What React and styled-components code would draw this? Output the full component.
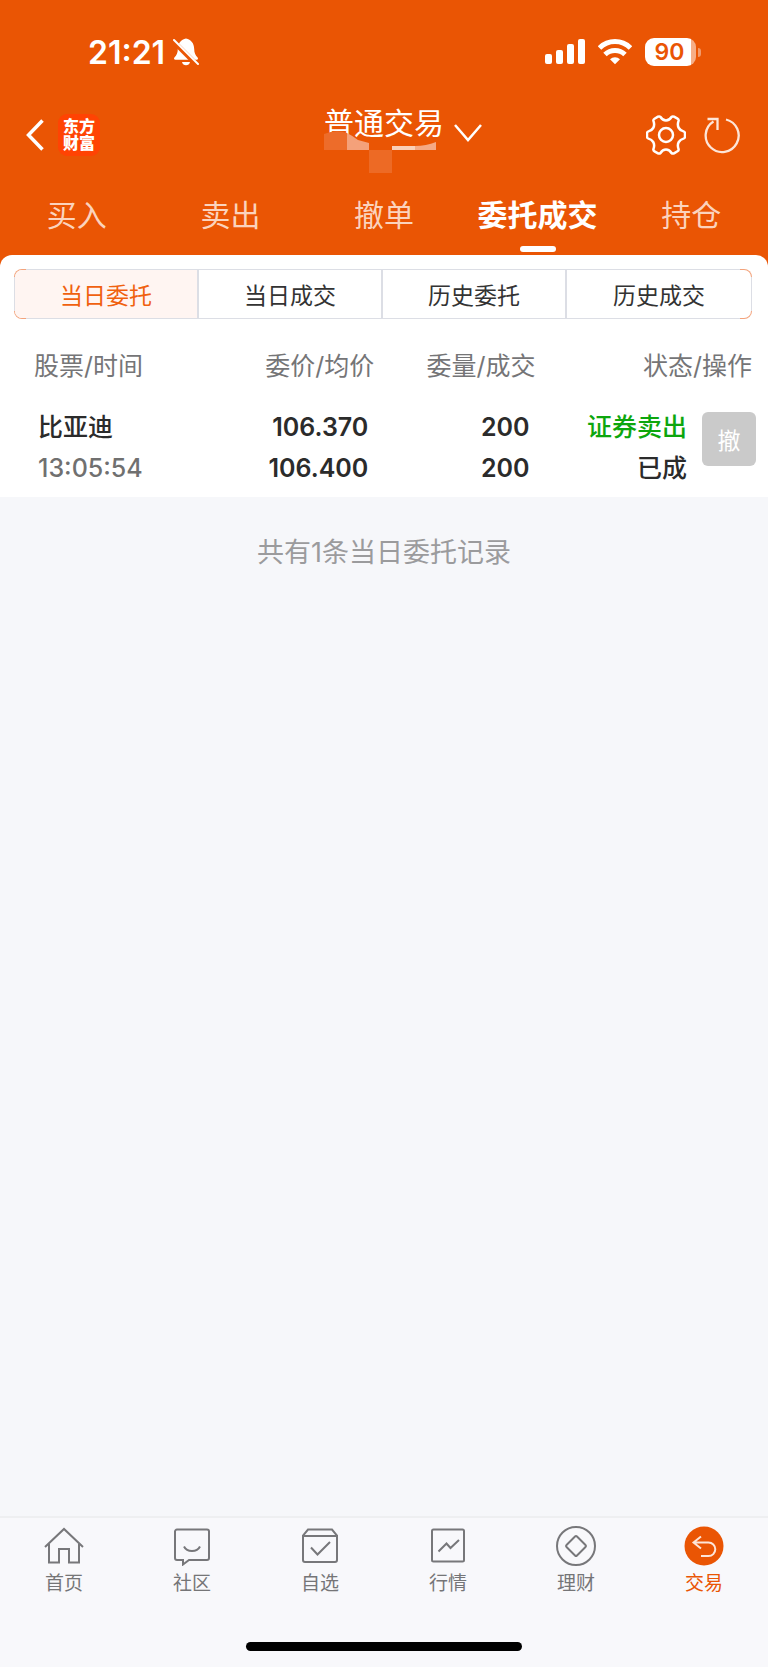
import styled, { createGlobalStyle } from "styled-components";

const GlobalStyle = createGlobalStyle`
  :root {
    --orange: #ea5504;
    --ink: #2b2b2b;
    --gray: #757577;
    --line: #dcdee5;
  }

  * {
    box-sizing: border-box;
  }

  body {
    margin: 0;
    background-color: #f6f7fa;
    font-family: Inter, "Noto Sans CJK SC", sans-serif;
    color: var(--ink);
  }

  button {
    padding: 0;
    border: none;
    background: none;
    font-family: inherit;
    color: inherit;
  }

  a {
    text-decoration: none;
    color: inherit;
  }

  svg {
    display: block;
    flex: none;
  }
`

const Page = styled.div`
  display: flex;
  flex-direction: column;
  min-height: 100vh;
`

const Top = styled.header`
  background-color: var(--orange);
  color: white;
`

const StatusBar = styled.div`
  display: flex;
  align-items: center;
  justify-content: space-between;
  height: 104px;
  padding: 0 67px 0 88px;
`

const StatusGroup = styled.div`
  display: flex;
  align-items: center;
  gap: ${({ $gap }) => $gap}px;
`

const Clock = styled.time`
  padding-top: 2px;
  font-size: 32px;
  font-weight: 600;
  line-height: 40px;
`

const Battery = styled.div`
  display: flex;
  align-items: center;
  gap: 2px;

  span {
    width: 51px;
    height: 28px;
    padding-right: 2px;
    border-radius: 9px;
    background: linear-gradient(90deg, white 46px, #f6ae87 46px);
    color: var(--orange);
    font-size: 23px;
    font-weight: 600;
    line-height: 28px;
    text-align: center;
  }

  &::after {
    content: "";
    width: 3px;
    height: 9px;
    border-radius: 0 4px 4px 0;
    background-color: #f29a6c;
  }
`

const NavBar = styled.div`
  display: grid;
  grid-template-columns: 1fr auto 1fr;
  height: 62px;
  padding: 0 28px 0 26px;
`

const NavSide = styled.div`
  display: flex;
  align-items: center;
  justify-content: ${({ $end }) => ($end ? "flex-end" : "flex-start")};
  gap: ${({ $end }) => ($end ? 18 : 14)}px;
`

const Logo = styled.a`
  display: flex;
  flex-direction: column;
  align-items: center;
  justify-content: center;
  width: 42px;
  height: 42px;
  border-radius: 9px;
  background-color: #ff4303;
  font-size: 16px;
  font-weight: 900;
  line-height: 17px;
`

const Account = styled.div`
  position: relative;
`

const AccountButton = styled.button`
  display: flex;
  align-items: center;
  gap: 10px;
  padding-left: 40px;
  font-size: 30px;
  line-height: 30px;

  svg {
    margin-top: 20px;
  }
`

const Mosaic = styled.svg`
  position: absolute;
  top: 27px;
  left: 40px;
`

const Tabs = styled.nav`
  display: grid;
  grid-template-columns: repeat(5, 1fr);
  padding: 29px 0 3px;
`

const Tab = styled.a`
  display: flex;
  flex-direction: column;
  align-items: center;
  gap: 11px;
  font-size: 30px;
  line-height: 40px;
  font-weight: ${({ $active }) => ($active ? 700 : 400)};
  color: ${({ $active }) => ($active ? "white" : "#fbd3bd")};

  &::after {
    content: "";
    width: 36px;
    height: 6px;
    border-radius: 3px;
    background-color: ${({ $active }) => ($active ? "white" : "transparent")};
  }
`

const SheetBack = styled.div`
  background-color: var(--orange);
`

const Sheet = styled.section`
  padding-top: 14px;
  border-radius: 12px 12px 0 0;
  background-color: white;
`

const Segments = styled.div`
  display: grid;
  grid-template-columns: repeat(4, 1fr);
  height: 50px;
  margin: 0 16px 0 14px;
  border: 1px solid transparent;
  border-radius: 8px;
  background:
    linear-gradient(white, white) padding-box,
    linear-gradient(90deg, transparent 12px, var(--line) 12px calc(100% - 12px), transparent 0) border-box,
    linear-gradient(#f3a37c 8px, var(--line) 8px calc(100% - 8px), #f3a37c 0) border-box;
`

const Segment = styled.button`
  font-size: 23px;
  color: ${({ $active }) => ($active ? "#f0610f" : "#333")};
  background-color: ${({ $active }) => ($active ? "#fff5f2" : "transparent")};
  border-right: 2px solid var(--line);

  &:first-child {
    border-radius: 7px 0 0 7px;
  }

  &:last-child {
    border-right: none;
  }
`

const Orders = styled.table`
  width: 100%;
  table-layout: fixed;
  border-collapse: collapse;
  text-align: right;
`

const Head = styled.th`
  width: ${({ $width }) => $width};
  padding: 32px 2px 26px 0;
  font-size: 25px;
  font-weight: 400;
  line-height: 30px;
  white-space: nowrap;
  color: var(--gray);

  &:first-child {
    padding-left: 34px;
    text-align: left;
  }

  &:last-child {
    padding-right: 16px;
  }
`

const Cell = styled.td`
  padding: 0 8px 8px 0;
  font-size: 25px;
  font-weight: 600;
  line-height: 41px;
  vertical-align: top;
  white-space: nowrap;

  &:first-child {
    padding-left: 38px;
    text-align: left;
  }

  &:last-child {
    padding-right: 12px;
  }
`

const Line = styled.div`
  height: 41px;
  font-weight: ${({ $soft, $cjk }) => ($soft || $cjk ? 500 : 600)};
  color: ${({ $soft, $sell }) => ($sell ? "#0da60d" : $soft ? "#707070" : "inherit")};
`

const Action = styled.div`
  display: flex;
  justify-content: flex-end;
  gap: 15px;
`

const CancelButton = styled.button`
  width: 54px;
  height: 54px;
  margin-top: 5px;
  border-radius: 6px;
  background-color: #cacaca;
  color: white;
  font-size: 23px;
`

const Summary = styled.p`
  flex: 1;
  margin: 0;
  padding-top: 37px;
  font-size: 27px;
  line-height: 38px;
  text-align: center;
  color: #9b9b9d;
`

const BottomBar = styled.footer`
  border-top: 2px solid #eeeff1;
  background-color: #f8f8fb;
`

const BottomNav = styled.nav`
  display: grid;
  grid-template-columns: repeat(6, 1fr);
  padding-top: 8px;
`

const BottomLink = styled.a`
  display: flex;
  flex-direction: column;
  align-items: center;
  gap: 4px;
  font-size: 19px;
  line-height: 28px;
  color: ${({ $active }) => ($active ? "var(--orange)" : "var(--gray)")};
`

const HomeIndicator = styled.div`
  width: 36%;
  height: 9px;
  margin: 44px auto 16px;
  border-radius: 5px;
  background-color: black;
`

const BellOff = () => (
  <svg width="26" height="28" viewBox="0 0 26 28" fill="white">
    <path d="M13 0.5C8 1.5 5 5 4.8 11c-.1 4-1 6-3.4 8.500-.8 1-.3 2.300 1 2.300h21.400c1.200 0 1.600-1.200.8-2.200-2.300-2.600-3.300-4.600-3.400-8.600C21 5 18 1.500 13 .5z" />
    <path d="M9 24h8c-.5 2.200-2 3.300-4 3.300S9.500 26.200 9 24z" />
    <path d="M0 3L25 28" stroke="#ea5504" strokeWidth="5" />
    <path d="M1 2L25 26" stroke="white" strokeWidth="2" strokeLinecap="round" />
  </svg>
)

const Signal = () => (
  <svg width="40" height="26" viewBox="0 0 40 26" fill="white">
    <rect x="0" y="15" width="7" height="10" rx="2" />
    <rect x="11" y="11" width="7" height="14" rx="2" />
    <rect x="22" y="5" width="7" height="20" rx="2" />
    <rect x="33" y="0" width="7" height="25" rx="2" />
  </svg>
)

const Wifi = () => (
  <svg width="34" height="26" viewBox="0 0 34 26" fill="none" stroke="white" strokeWidth="5">
    <path d="M1.500 9a22 22 0 0 1 31 0" />
    <path d="M7 15.500a14.500 14.500 0 0 1 20 0" />
    <path d="M17 25.200l-5-5a7.500 7.500 0 0 1 10 0z" fill="white" stroke="none" />
  </svg>
)

const Back = () => (
  <svg width="18" height="32" viewBox="0 0 18 32" fill="none" stroke="white" strokeWidth="3.500">
    <path d="M16.500 1.500L2.500 16l14 14.500" />
  </svg>
)

const ChevronDown = () => (
  <svg width="28" height="18" viewBox="0 0 28 18" fill="none" stroke="white" strokeWidth="2.500">
    <path d="M1 1l13 15L27 1" />
  </svg>
)

const Gear = () => (
  <svg width="40" height="40" viewBox="0 0 40 40" fill="none" stroke="white" strokeWidth="2.500" strokeLinejoin="round">
    <path d="M14.500 2C16 4.500 17.500 5.500 20 5.500S24 4.500 25.500 2Q26.500 1 28 1.700L31.500 3.700Q33 4.600 32.500 6.200C31.500 9 31.500 10.800 32.800 13S35.300 15.900 37.500 16.400Q39 16.800 39 18.300V21.700Q39 23.200 37.500 23.600C35.300 24.100 34.100 24.800 32.800 27S31.500 31 32.500 33.800Q33 35.400 31.500 36.300L28 38.300Q26.500 39 25.500 38C24 35.500 22.500 34.500 20 34.500S16 35.500 14.500 38Q13.500 39 12 38.300L8.500 36.300Q7 35.400 7.500 33.800C8.500 31 8.500 29.200 7.200 27S4.700 24.100 2.500 23.600Q1 23.200 1 21.700V18.300Q1 16.800 2.500 16.400C4.700 15.900 5.900 15.200 7.200 13S8.500 9 7.500 6.200Q7 4.600 8.500 3.700L12 1.700Q13.500 1 14.500 2Z" />
    <circle cx="20" cy="20" r="7" />
  </svg>
)

const Refresh = () => (
  <svg width="36" height="38" viewBox="0 0 36 38" fill="none" stroke="#fde5d8" strokeWidth="2.300">
    <path d="M3.500 3h10v11M9.500 5.500A16.500 16.500 0 1 0 22 3.500" />
  </svg>
)

const icons = {
  home: <path d="M1 21L20 3l19 18M5 18v18.500h10V23h10v13.500h10V18" />,
  community: (
    <>
      <path d="M5 3.500h30a2 2 0 0 1 2 2V32a2 2 0 0 1-2 2H17l-6 4.500V34H5a2 2 0 0 1-2-2V5.500a2 2 0 0 1 2-2z" />
      <path d="M12 20.500c3 6 13 6 16 0" />
    </>
  ),
  watchlist: (
    <>
      <path d="M8 3.500h24l5 6V34a2 2 0 0 1-2 2H5a2 2 0 0 1-2-2V9.500zM3 10h34" />
      <path d="M11 21.500l6.500 7L30 16" />
    </>
  ),
  market: (
    <>
      <rect x="4" y="3.500" width="32" height="32" rx="1.500" />
      <path d="M10.500 25.500l8-8 4 4.500 8.500-8" />
    </>
  ),
  wealth: (
    <>
      <circle cx="20" cy="20" r="19" />
      <path d="M19 10.500q1-1 2 0l8.500 8.500q1 1 0 2L21 29.500q-1 1-2 0L10.500 21q-1-1 0-2z" />
    </>
  ),
  trade: (
    <>
      <circle cx="20" cy="20" r="19.500" fill="#ea5504" stroke="none" />
      <path d="M17 10.500l-7.500 6 7.500 6M9.500 16.500h15a6.800 6.800 0 0 1 0 13.600H17" stroke="#fde5d8" />
    </>
  ),
}

const tabs = ["买入", "卖出", "撤单", "委托成交", "持仓"]
const segments = ["当日委托", "当日成交", "历史委托", "历史成交"]

const bottomLinks = [
  { icon: "home", label: "首页" },
  { icon: "community", label: "社区" },
  { icon: "watchlist", label: "自选" },
  { icon: "market", label: "行情" },
  { icon: "wealth", label: "理财" },
  { icon: "trade", label: "交易" },
]

const orders = [
  { name: "比亚迪", time: "13:05:54", price: "106.370", average: "106.400", amount: 200, filled: 200, side: "证券卖出", status: "已成" },
]

const App = () => {

  return (
    <Page>
      <GlobalStyle />
      <Top>
        <StatusBar>
          <StatusGroup $gap={8}>
            <Clock>21:21</Clock>
            <BellOff />
          </StatusGroup>
          <StatusGroup $gap={13}>
            <Signal />
            <Wifi />
            <Battery><span>90</span></Battery>
          </StatusGroup>
        </StatusBar>
        <NavBar>
          <NavSide>
            <button aria-label="返回"><Back /></button>
            <Logo href="#home">
              <span>东方</span>
              <span>财富</span>
            </Logo>
          </NavSide>
          <Account>
            <Mosaic width="114" height="44" viewBox="0 0 114 44">
              <path d="M0 3Q12-2 23 2V19H0z" fill="#ed6c2a" />
              <path d="M23 2Q29 5 34 9L45 12V19H23z" fill="#f4a17a" />
              <path d="M45 19h23v23H45z" fill="#ed6a25" />
              <path d="M68 15h23v4H68z" fill="#fad0b8" />
              <path d="M91 15q11 0 21-4v8H91z" fill="#f5a985" />
            </Mosaic>
            <AccountButton>
              普通交易
              <ChevronDown />
            </AccountButton>
          </Account>
          <NavSide $end>
            <button aria-label="设置"><Gear /></button>
            <button aria-label="刷新"><Refresh /></button>
          </NavSide>
        </NavBar>
        <Tabs>
          {tabs.map((tab) => (
            <Tab key={tab} href="#tab" $active={tab === "委托成交"}>{tab}</Tab>
          ))}
        </Tabs>
      </Top>
      <SheetBack>
        <Sheet>
          <Segments>
            {segments.map((segment, i) => (
              <Segment key={segment} $active={i === 0}>{segment}</Segment>
            ))}
          </Segments>
          <Orders>
            <thead>
              <tr>
                <Head $width="24%">股票/时间</Head>
                <Head $width="25%">委价/均价</Head>
                <Head $width="21%">委量/成交</Head>
                <Head $width="30%">状态/操作</Head>
              </tr>
            </thead>
            <tbody>
              {orders.map((order) => (
                <tr key={order.time}>
                  <Cell>
                    <Line $cjk>{order.name}</Line>
                    <Line $soft>{order.time}</Line>
                  </Cell>
                  <Cell>
                    <Line>{order.price}</Line>
                    <Line>{order.average}</Line>
                  </Cell>
                  <Cell>
                    <Line>{order.amount}</Line>
                    <Line>{order.filled}</Line>
                  </Cell>
                  <Cell>
                    <Action>
                      <div>
                        <Line $cjk $sell>{order.side}</Line>
                        <Line $cjk>{order.status}</Line>
                      </div>
                      <CancelButton>撤</CancelButton>
                    </Action>
                  </Cell>
                </tr>
              ))}
            </tbody>
          </Orders>
        </Sheet>
      </SheetBack>
      <Summary>共有1条当日委托记录</Summary>
      <BottomBar>
        <BottomNav>
          {bottomLinks.map(({ icon, label }) => (
            <BottomLink key={icon} href={`#${icon}`} $active={icon === "trade"}>
              <svg width="40" height="40" viewBox="0 0 40 40" fill="none" stroke="#77777a" strokeWidth="2">
                {icons[icon]}
              </svg>
              {label}
            </BottomLink>
          ))}
        </BottomNav>
        <HomeIndicator />
      </BottomBar>
    </Page>
  );
}

export default App;
